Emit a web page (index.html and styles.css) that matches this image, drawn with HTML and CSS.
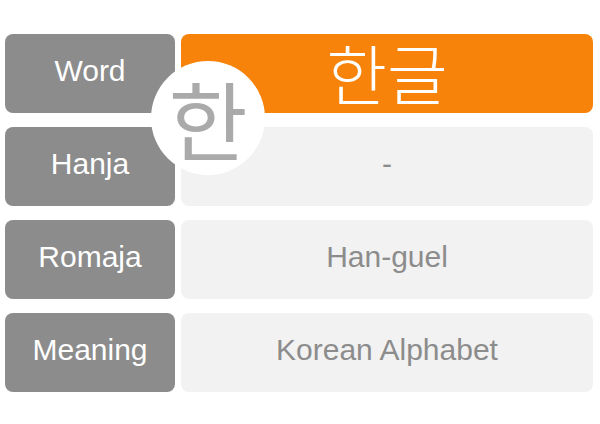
FILE: index.html
```html
<!DOCTYPE html>
<html lang="en">
<head>
<meta charset="utf-8">
<title>Word card</title>
<link rel="stylesheet" href="styles.css">
</head>
<body>
<div class="card">
  <div class="row">
    <div class="label">Word</div>
    <div class="value value-word" lang="ko">한글</div>
  </div>
  <div class="row">
    <div class="label">Hanja</div>
    <div class="value">-</div>
  </div>
  <div class="row">
    <div class="label">Romaja</div>
    <div class="value">Han-guel</div>
  </div>
  <div class="row">
    <div class="label">Meaning</div>
    <div class="value">Korean Alphabet</div>
  </div>
  <div class="badge" lang="ko">한</div>
</div>
</body>
</html>
```
FILE: styles.css
```css
html, body {
  margin: 0;
  padding: 0;
  background: #ffffff;
}
body {
  font-family: "Liberation Sans", Arial, sans-serif;
}
.card {
  position: relative;
  width: 600px;
  height: 424px;
  box-sizing: border-box;
  padding: 34px 7px 0 5px;
  display: flex;
  flex-direction: column;
  gap: 14px;
}
.row {
  display: grid;
  grid-template-columns: 170px 1fr;
  grid-template-rows: 79px;
  gap: 6px;
  height: 79px;
  flex: none;
}
.label,
.value {
  border-radius: 8px;
  font-size: 30px;
  line-height: 1;
  display: flex;
  align-items: center;
  justify-content: center;
  box-sizing: border-box;
  padding-bottom: 5px;
}
.label {
  background: #8c8c8c;
  color: #ffffff;
}
.value {
  background: #f2f2f2;
  color: #8c8c8c;
}
.value-word {
  background: #f7830a;
  color: #ffffff;
  font-family: "Noto Sans CJK KR", sans-serif;
  font-size: 66px;
  font-weight: 300;
  padding-bottom: 6px;
}
.badge {
  position: absolute;
  left: 151px;
  top: 61px;
  width: 114px;
  height: 114px;
  border-radius: 50%;
  background: #ffffff;
  color: #aaaaaa;
  font-family: "Noto Sans CJK KR", sans-serif;
  font-size: 86px;
  display: flex;
  align-items: center;
  justify-content: center;
  line-height: 1;
}
```
